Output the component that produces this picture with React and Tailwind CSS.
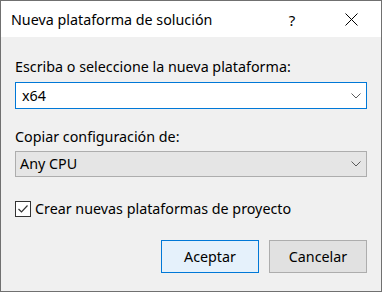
import React from "react";

function Chevron() {
  return (
    <svg width="10" height="6" viewBox="0 0 10 6" className="block">
      <path d="M0.5 0.5 L5 5 L9.5 0.5" fill="none" stroke="#5a5a5a" strokeWidth="1" />
    </svg>
  );
}

export default function App() {
  const font = { fontFamily: '"Segoe UI", "Noto Sans", sans-serif' };
  return (
    <div
      className="w-[382px] h-[292px] border border-[#707070] bg-[#f0f0f0] flex flex-col text-[14.3px] text-black leading-[20px]"
      style={font}
    >
      <div className="h-[36px] bg-white flex items-center shrink-0">
        <div className="ml-[10px] flex-1 pt-[2px]">Nueva plataforma de solución</div>
        <div className="w-[20px] text-center mr-[42px] pt-[2px] text-[15px]">?</div>
        <div className="w-[14px] h-[14px] mr-[23px] flex items-center justify-center">
          <svg width="13" height="13" viewBox="0 0 13 13">
            <path d="M0.5 0.5 L12.5 12.5 M12.5 0.5 L0.5 12.5" stroke="#000" strokeWidth="1" />
          </svg>
        </div>
      </div>
      <div className="flex-1 px-[14px] pt-[20px] flex flex-col">
        <div className="h-[20px]">Escriba o seleccione la nueva plataforma:</div>
        <div className="mt-[5px] h-[27px] border border-[#0078d7] bg-white flex items-center pl-[6px] pr-[5px]">
          <span className="flex-1">x64</span>
          <Chevron />
        </div>
        <div className="mt-[18px] h-[20px]">Copiar configuración de:</div>
        <div className="mt-[4px] h-[26px] border border-[#adadad] bg-[#e5e5e5] flex items-center pl-[4px] pr-[5px]">
          <span className="flex-1">Any CPU</span>
          <Chevron />
        </div>
        <div className="mt-[22px] flex items-center h-[20px]">
          <div className="w-[16px] h-[16px] border border-[#333] bg-white flex items-center justify-center">
            <svg width="12" height="12" viewBox="0 0 12 12">
              <path d="M1.5 6 L4.5 9 L10.5 2.5" fill="none" stroke="#333" strokeWidth="1.2" />
            </svg>
          </div>
          <span className="ml-[4px]">Crear nuevas plataformas de proyecto</span>
        </div>
        <div className="mt-[21px] flex justify-end gap-[10px]">
          <button className="w-[98px] h-[33px] border border-[#0078d7] bg-[#e5f1fb] text-[14.3px]">Aceptar</button>
          <button className="w-[98px] h-[33px] border border-[#adadad] bg-[#e1e1e1] text-[14.3px]">Cancelar</button>
        </div>
      </div>
    </div>
  );
}
